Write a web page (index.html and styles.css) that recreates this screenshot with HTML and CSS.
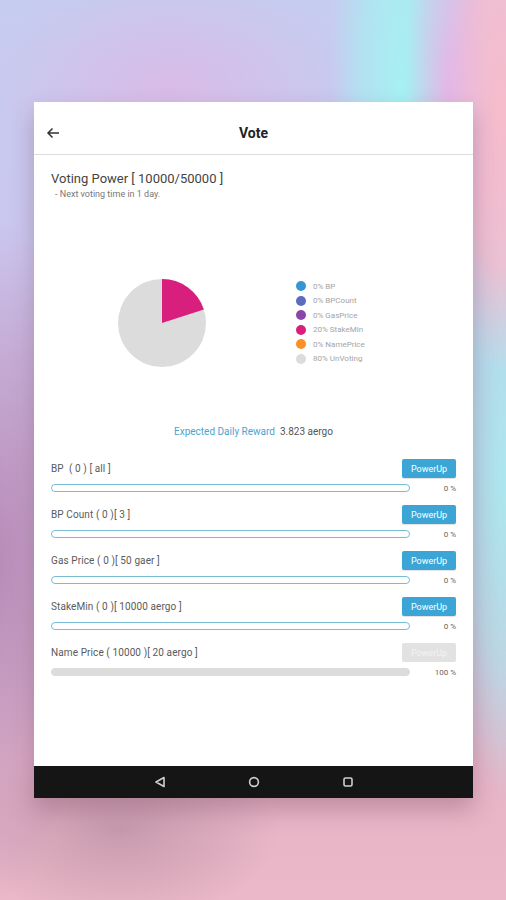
FILE: index.html
```html
<!DOCTYPE html>
<html>
<head>
<meta charset="utf-8">
<link rel="stylesheet" href="styles.css">
</head>
<body>
<div class="stage">
  <div class="device">
    <header class="appbar">
      <svg class="back" width="14" height="12" viewBox="0 0 14 12"><path d="M13 6H2M6.5 1.5L2 6l4.5 4.5" fill="none" stroke="#333" stroke-width="1.5"/></svg>
      <div class="title">Vote</div>
    </header>
    <main class="content">
      <div class="power">Voting Power [ 10000/50000 ]</div>
      <div class="next">- Next voting time in 1 day.</div>
      <div class="chart">
        <svg class="pie" width="90" height="90" viewBox="0 0 90 90">
          <circle cx="45" cy="45" r="44" fill="#dcdcdc"/>
          <path d="M45 45L45 1A44 44 0 0 1 86.85 31.4Z" fill="#d81f7e"/>
        </svg>
        <ul class="legend">
          <li><span class="dot" style="background:#3497d3"></span>0% BP</li>
          <li><span class="dot" style="background:#5c6cbf"></span>0% BPCount</li>
          <li><span class="dot" style="background:#8c44ab"></span>0% GasPrice</li>
          <li><span class="dot" style="background:#d81f7e"></span>20% StakeMin</li>
          <li><span class="dot" style="background:#fb9126"></span>0% NamePrice</li>
          <li><span class="dot" style="background:#dcdcdc"></span>80% UnVoting</li>
        </ul>
      </div>
      <div class="reward"><span class="rlabel">Expected Daily Reward</span><span class="rval">3.823 aergo</span></div>
      <div class="rows">
        <div class="row">
          <div class="rowtop"><span class="label">BP &nbsp;( 0 ) [ all ]</span><button class="btn">PowerUp</button></div>
          <div class="rowbot"><div class="bar"></div><span class="pct">0 %</span></div>
        </div>
        <div class="row">
          <div class="rowtop"><span class="label">BP Count ( 0 )[ 3 ]</span><button class="btn">PowerUp</button></div>
          <div class="rowbot"><div class="bar"></div><span class="pct">0 %</span></div>
        </div>
        <div class="row">
          <div class="rowtop"><span class="label">Gas Price ( 0 )[ 50 gaer ]</span><button class="btn">PowerUp</button></div>
          <div class="rowbot"><div class="bar"></div><span class="pct">0 %</span></div>
        </div>
        <div class="row">
          <div class="rowtop"><span class="label">StakeMin ( 0 )[ 10000 aergo ]</span><button class="btn">PowerUp</button></div>
          <div class="rowbot"><div class="bar"></div><span class="pct">0 %</span></div>
        </div>
        <div class="row">
          <div class="rowtop"><span class="label">Name Price ( 10000 )[ 20 aergo ]</span><button class="btn disabled">PowerUp</button></div>
          <div class="rowbot"><div class="bar full"></div><span class="pct">100 %</span></div>
        </div>
      </div>
    </main>
    <nav class="navbar">
      <svg width="12" height="12" viewBox="0 0 12 12"><path d="M10 1.5L2 6l8 4.5Z" fill="none" stroke="#cfcfcf" stroke-width="1.6" stroke-linejoin="round"/></svg>
      <svg width="12" height="12" viewBox="0 0 12 12"><circle cx="6" cy="6" r="4.4" fill="none" stroke="#cfcfcf" stroke-width="1.6"/></svg>
      <svg width="12" height="12" viewBox="0 0 12 12"><rect x="2" y="2" width="8" height="8" rx="1.5" fill="none" stroke="#cfcfcf" stroke-width="1.6"/></svg>
    </nav>
  </div>
</div>
</body>
</html>
```
FILE: styles.css
```css
* { box-sizing: border-box; }
html, body { margin: 0; padding: 0; }
body {
  width: 506px;
  height: 900px;
  overflow: hidden;
  font-family: Roboto, "Liberation Sans", sans-serif;
}
.stage {
  width: 506px;
  height: 900px;
  padding: 102px 0 0 34px;
  background:
    radial-gradient(ellipse 40px 220px at 448px 90px, rgba(234,178,228,0.85) 0%, rgba(234,178,228,0) 100%),
    radial-gradient(ellipse 60px 260px at 500px 110px, rgba(246,188,204,1) 0%, rgba(246,188,204,0.8) 60%, rgba(246,188,204,0) 100%),
    radial-gradient(ellipse 70px 360px at 400px 90px, rgba(166,240,242,1) 0%, rgba(166,240,242,0.6) 55%, rgba(166,240,242,0) 100%),
    radial-gradient(ellipse 80px 320px at 510px 480px, rgba(170,232,238,1) 0%, rgba(170,232,238,0.6) 60%, rgba(170,232,238,0) 100%),
    radial-gradient(ellipse 180px 120px at 170px 90px, rgba(218,186,230,0.9) 0%, rgba(218,186,230,0) 100%),
    radial-gradient(ellipse 90px 340px at 0px 560px, rgba(184,140,184,1) 0%, rgba(184,140,184,0) 100%),
    radial-gradient(ellipse 160px 90px at 120px 830px, rgba(176,136,156,0.6) 0%, rgba(176,136,156,0) 100%),
    linear-gradient(180deg, #c6ccf0 0%, #cbc6ee 28%, #d2b8dc 60%, #e6b4c6 86%, #eab8c8 100%);
}
.device {
  width: 439px;
  height: 696px;
  background: #fff;
  display: flex;
  flex-direction: column;
  box-shadow: 0 12px 22px rgba(90,40,70,0.28);
}
.appbar {
  height: 53px;
  flex: none;
  display: flex;
  align-items: center;
  position: relative;
  border-bottom: 1px solid #dcdcdc;
  padding: 10px 0 0 12px;
}
.back { display: block; }
.title {
  position: absolute;
  left: 0; right: 0;
  top: 10px; bottom: 0;
  display: flex;
  align-items: center;
  justify-content: center;
  font-size: 14px;
  font-weight: 700;
  color: #222;
  pointer-events: none;
}
.content {
  flex: 1;
  padding: 16px 17px 0 17px;
  color: #555;
}
.power {
  font-size: 13px;
  line-height: 16px;
  color: #444;
}
.next {
  font-size: 9px;
  line-height: 12px;
  margin-top: 1px;
  padding-left: 4px;
  color: #777;
}
.chart {
  display: flex;
  align-items: center;
  height: 193px;
  padding-top: 52px;
  padding-left: 66px;
}
.pie { display: block; }
.legend {
  list-style: none;
  margin: 0 0 0 89px;
  padding: 0;
}
.legend li {
  display: flex;
  align-items: center;
  height: 14.6px;
  font-size: 8px;
  color: #a4a4a4;
}
.dot {
  width: 10px;
  height: 10px;
  border-radius: 50%;
  margin-right: 7px;
  flex: none;
}
.reward {
  text-align: center;
  font-size: 10px;
  line-height: 12px;
  margin-top: 33px;
}
.rlabel { color: #4aa4cf; margin-right: 5px; }
.rval { color: #555; }
.rows {
  margin-top: 21px;
  display: flex;
  flex-direction: column;
  gap: 13px;
}
.row { display: flex; flex-direction: column; gap: 6px; }
.rowtop {
  display: flex;
  justify-content: space-between;
  align-items: center;
  height: 19px;
}
.label { font-size: 10px; letter-spacing: 0.1px; color: #5a5a5a; }
.btn {
  width: 54px;
  height: 19px;
  border: none;
  border-radius: 2px;
  background: #3ba6d6;
  color: #fff;
  font-family: inherit;
  font-size: 9px;
  padding: 0;
  box-shadow: 0 1px 1px rgba(0,0,0,0.12);
}
.btn.disabled { background: #e2e2e2; color: #f2f2f2; box-shadow: none; }
.rowbot {
  display: flex;
  align-items: center;
  height: 8px;
}
.bar {
  width: 359px;
  height: 8px;
  border: 1px solid #78bcd6;
  border-radius: 4px;
  background: #fff;
}
.bar.full { background: #dcdcdc; border-color: #dcdcdc; }
.pct {
  flex: 1;
  text-align: right;
  font-size: 8px;
  color: #666;
}
.navbar {
  height: 32px;
  flex: none;
  background: #151515;
  display: flex;
  align-items: center;
  justify-content: center;
  gap: 82px;
}
.navbar svg { display: block; }
```
